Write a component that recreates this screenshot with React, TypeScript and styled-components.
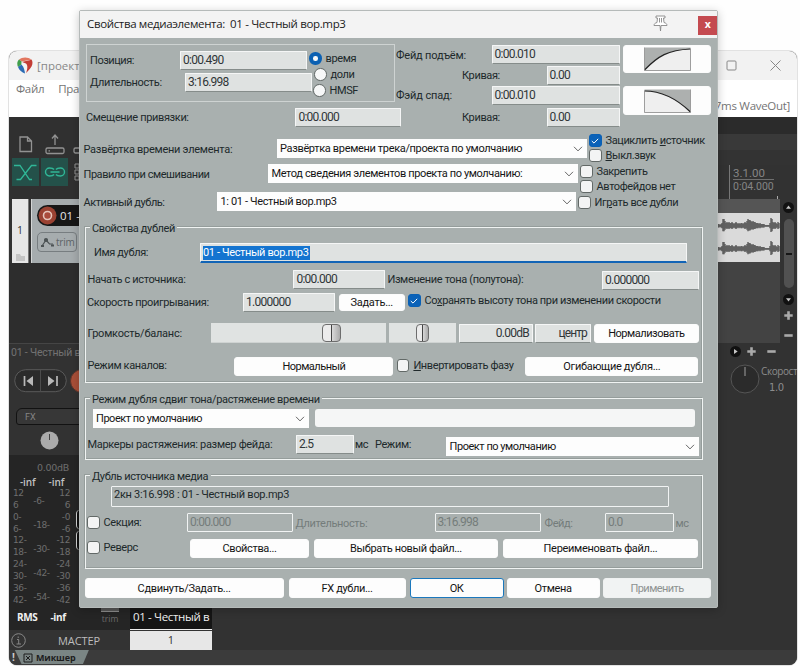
import React from 'react';
import styled, { createGlobalStyle, css } from 'styled-components';

const GlobalStyle = createGlobalStyle`
  * { box-sizing: border-box; }
  body { margin: 0; background: #fefefe; overflow: hidden; }
  svg { flex: none; display: block; }
`;

interface Place { $w?: number; $h?: number; $ml?: number; $mt?: number }

const place = css<Place>`
  flex: none;
  ${p => p.$w !== undefined && `width: ${p.$w}px;`}
  ${p => p.$h !== undefined && `height: ${p.$h}px;`}
  margin-left: ${p => p.$ml ?? 0}px;
  margin-top: ${p => p.$mt ?? 0}px;
`;

const Stage = styled.div`
  position: relative;
  width: 800px;
  height: 670px;
  padding: 51px 3px 5px 9px;
  overflow: hidden;
  font-family: Roboto, "Liberation Sans", sans-serif;
  font-size: 11px;
`;

/* ---------- main window ---------- */

const MainWindow = styled.div`
  display: flex;
  flex-direction: column;
  height: 614px;
  border-radius: 8px;
  overflow: hidden;
  background: #323232;
  box-shadow: 0 0 0 1px #e2e2e2;
  font-family: "Open Sans", sans-serif;
`;

const MainTitle = styled.div`
  display: flex;
  align-items: center;
  height: 29px;
  padding: 0 16px 0 8px;
  background: #f2f2f2;
  color: #888;
  font-size: 11.5px;
`;

const MainTitleText = styled.span`
  flex: 1;
  margin-left: 4px;
`;

const WindowIcons = styled.div`
  display: flex;
  gap: 33px;
`;

const MenuBar = styled.div`
  display: flex;
  justify-content: space-between;
  height: 37px;
  padding: 1px 7px 0 7px;
  background: #fff;
  color: #757575;
  font-size: 11.5px;
  line-height: 16px;
  letter-spacing: -0.3px;
`;

const MenuItems = styled.div`
  display: flex;
  gap: 14px;
`;

const AudioStatus = styled.span`
  margin-top: 17px;
`;

const Workspace = styled.div`
  display: flex;
  justify-content: space-between;
  height: 533px;
`;

const LeftSide = styled.div`
  display: flex;
  flex-direction: column;
  width: 203px;
`;

const RightSide = styled.div`
  display: flex;
  flex-direction: column;
  width: 80px;
`;

const Toolbar = styled.div`
  display: grid;
  grid-template-columns: 27px 27px 27px;
  grid-template-rows: 28px 28px;
  gap: 0 2px;
  height: 82px;
  padding: 13px 0 0 3px;
  background: #303030;
`;

const Tool = styled.div<{ $on?: boolean }>`
  display: flex;
  align-items: center;
  justify-content: center;
  background: ${p => (p.$on ? '#24514a' : 'transparent')};
  color: ${p => (p.$on ? '#30b797' : '#929292')};
`;

const Track = styled.div`
  display: flex;
  height: 64px;
  padding-left: 3px;
`;

const TrackNumber = styled.div`
  display: flex;
  flex-direction: column;
  justify-content: space-between;
  width: 17px;
  padding: 24px 4px 2px;
  background: #e6e6e6;
  border-right: 1px solid #777;
  color: #333;
  font-size: 10.5px;
  line-height: 15px;
  text-align: center;
`;

const TrackPanel = styled.div`
  width: 60px;
  margin-left: 2px;
  padding: 6px 0 0 5px;
  background: #a6acae;
  border-left: 1px solid #d4d6d6;
`;

const TrackName = styled.div`
  display: flex;
  align-items: center;
  gap: 3px;
  height: 21px;
  padding-left: 1px;
  border-radius: 11px 0 0 11px;
  background: #171717;
  color: #e8e8e8;
  font-size: 11.5px;
  white-space: nowrap;
`;

const TrimButton = styled.div`
  display: flex;
  align-items: center;
  gap: 2px;
  width: 40px;
  height: 20px;
  margin-top: 6px;
  padding-left: 3px;
  border: 1px solid #777d80;
  border-radius: 5px 4px 4px 4px;
  color: #5d6366;
  font-size: 10px;
  letter-spacing: -0.2px;
`;

const ArrangeEmpty = styled.div`
  height: 81px;
  background: #2d2d2d;
  border-bottom: 1px solid #454545;
`;

const ItemCaption = styled.div`
  height: 18px;
  padding-left: 2px;
  color: #737373;
  font: 10.5px/17px Roboto, sans-serif;
  letter-spacing: -0.2px;
  white-space: nowrap;
`;

const Transport = styled.div`
  display: flex;
  gap: 3px;
  height: 42px;
  padding: 7px 0 0 5px;
`;

const FxBar = styled.div`
  width: 80px;
  height: 17px;
  margin: 4px 0 0 7px;
  padding-left: 8px;
  border: 1.5px solid #121212;
  border-radius: 6px 0 0 3px;
  background: #373737;
  color: #858585;
  font: 9px/17px Roboto, sans-serif;
`;

const PanKnob = styled.div`
  display: flex;
  justify-content: center;
  width: 80px;
  height: 30px;
  padding-top: 6px;
`;

const Mixer = styled.div`
  display: flex;
  flex: 1;
  background: #252525;
`;

const MasterMeter = styled.div`
  display: flex;
  flex-direction: column;
  width: 62px;
  padding: 7px 0 0 3px;
  color: #6e6e6e;
  font: 9.5px/12px "DejaVu Sans", sans-serif;
`;

const MasterGain = styled.div`
  padding-left: 25px;
  letter-spacing: -0.3px;
`;

const Peaks = styled.div<{ $mt: number; $bold?: boolean }>`
  display: flex;
  gap: 13px;
  height: 12px;
  margin-top: ${p => p.$mt}px;
  padding-left: ${p => (p.$bold ? 5 : 8)}px;
  color: ${p => (p.$bold ? '#f0f0f0' : '#c2c2c2')};
  font-family: "Open Sans", sans-serif;
  font-size: 10px;
  line-height: ${p => (p.$bold ? 12 : 10)}px;
  font-weight: ${p => (p.$bold ? 700 : 600)};
  letter-spacing: ${p => (p.$bold ? -0.35 : -0.1)}px;
`;

const Scales = styled.div`
  display: flex;
  justify-content: space-between;
  width: 58px;
  height: 119px;
  margin-top: -1px;
  padding-left: 1px;
  letter-spacing: -0.4px;
  font-size: 9px;
`;

const ScaleColumn = styled.div<{ $step: number; $align?: string; $mt?: number }>`
  display: flex;
  flex-direction: column;
  margin-top: ${p => p.$mt ?? 0}px;
  line-height: ${p => p.$step}px;
  text-align: ${p => p.$align ?? 'left'};
`;

const FaderEdges = styled.div`
  display: flex;
  flex-direction: column;
  gap: 2px;
  width: 29px;
  padding: 55px 0 0 5px;
`;

const FaderEdge = styled.div`
  height: 19px;
  border-left: 1.5px solid #d5d5d5;
  border-radius: 4px;
  background: #0f0f0f;
`;

const TrimStrip = styled.div`
  display: flex;
  flex-direction: column;
  align-items: center;
  width: 20px;
  padding-top: 151px;
  color: #6b6b6b;
  font-size: 8.5px;
  line-height: 14px;
`;

const TrimSlot = styled.div`
  width: 18px;
  height: 6px;
  border-bottom: 1px solid #8a8a8a;
  background: #555;
`;

const StripName = styled.div`
  align-self: flex-end;
  width: 82px;
  height: 24px;
  margin-left: 10px;
  padding-left: 3px;
  border-bottom: 1px solid #eee;
  background: #151515;
  color: #f2f2f2;
  font-size: 11.5px;
  line-height: 22px;
  letter-spacing: -0.35px;
  white-space: nowrap;
`;

const MasterRow = styled.div`
  display: flex;
  align-items: center;
  height: 20px;
  padding-left: 2px;
  background: #333;
  color: #bdbdbd;
  font-size: 11px;
`;

const MasterName = styled.span`
  width: 86px;
  margin-left: 32px;
  letter-spacing: -0.1px;
`;

const StripNumber = styled.div`
  width: 82px;
  height: 19px;
  margin-left: -14px;
  background: #e7e7e7;
  color: #333;
  line-height: 18px;
  text-align: center;
`;

const DockBar = styled.div`
  display: flex;
  height: 15px;
  padding-left: 3px;
  background: #3b3b3b;
  color: #ccc;
  font: bold 10px/14px "Open Sans", sans-serif;
`;

const DockTab = styled.div`
  display: flex;
  align-items: center;
  gap: 3px;
  width: 74px;
  height: 14px;
  padding: 1px 0 0 8px;
  background: #7a8584;
  clip-path: polygon(0 0, 100% 0, 92% 100%, 9% 100%);
  color: #1d1d1d;
  font-size: 9px;
  letter-spacing: -0.1px;
`;

const RulerTop = styled.div`
  height: 48px;
  background: linear-gradient(#2b2b2b 0 17px, #393939 17px 33px, #333 33px);
`;

const Ruler = styled.div`
  display: flex;
  align-items: flex-start;
  height: 34px;
  padding-left: 12px;
`;

const RulerMark = styled.div`
  width: 48px;
  height: 35px;
  padding-left: 3px;
  border-left: 1px solid #777;
  color: #858585;
  font: 11px/15px Roboto, sans-serif;
`;

const RulerBeat = styled.div`
  width: 41px;
  height: 15px;
  border-bottom: 1px solid #6f6f6f;
  font-size: 11.5px;
  line-height: 17px;
`;

const RulerTime = styled.div`
  line-height: 13px;
  font-size: 10.5px;
`;

const RulerTick = styled.div`
  height: 4px;
  margin-top: 31px;
  border-left: 1px solid #aaa;
`;

const Arrange = styled.div`
  display: flex;
  height: 144px;
`;

const ArrangeLane = styled.div`
  width: 63px;
  padding-top: 14px;
  background: linear-gradient(#555 0 14px, #434343 14px);
`;

const ScrollRail = styled.div`
  display: flex;
  flex-direction: column;
  align-items: center;
  width: 17px;
  padding-top: 3px;
`;

const ScrollThumb = styled.div`
  display: flex;
  align-items: center;
  width: 10px;
  height: 69px;
  margin: 6px 0;
  border-radius: 5px;
  background: #515151;
`;

const ThumbGrip = styled.div`
  width: 6px;
  height: 2px;
  margin: 0 2px;
  background: #161616;
`;

const ZoomRow = styled.div`
  display: flex;
  align-items: center;
  height: 17px;
  padding-left: 13px;
`;

const ZoomButtons = styled.div`
  display: flex;
  gap: 11px;
  margin-left: 6px;
`;

const RateArea = styled.div`
  display: flex;
  gap: 1px;
  padding: 3px 0 0 13px;
  color: #8c8c8c;
  font-size: 10px;
  line-height: 17px;
  letter-spacing: -0.4px;
  white-space: nowrap;
`;

const RateValue = styled.div`
  padding-left: 8px;
  font: 10px/15px "DejaVu Sans", sans-serif;
`;

/* ---------- dialog ---------- */

const Dialog = styled.div`
  position: absolute;
  left: 79px;
  top: 10px;
  width: 639px;
  height: 598px;
  display: flex;
  flex-direction: column;
  border: 1px solid #b5bab9;
  border-radius: 2px;
  background: #a9b0af;
  box-shadow: 0 2px 10px rgba(0, 0, 0, 0.22);
  color: #20292b;
  letter-spacing: -0.36px;
`;

const DialogTitle = styled.div`
  display: flex;
  height: 27px;
  padding-left: 7px;
  background: #f3f3f3;
  color: #1b1b1b;
  font: 11.5px/26px "Open Sans", sans-serif;
  letter-spacing: -0.35px;
  white-space: pre;
`;

const DialogTitleText = styled.span`
  width: 566px;
`;

const CloseButton = styled.div`
  width: 19px;
  height: 19px;
  margin: 5px 0 0 30px;
  background: #c44a50;
  color: #fff;
  font: bold 10.5px/17px "Open Sans", sans-serif;
  text-align: center;
`;

const Row = styled.div<{ $h?: number; $mt?: number; $ml?: number }>`
  display: flex;
  align-items: flex-start;
  height: ${p => p.$h ?? 19}px;
  margin-top: ${p => p.$mt ?? 0}px;
  margin-left: ${p => p.$ml ?? 0}px;
`;

const Column = styled.div<Place>`
  display: flex;
  flex-direction: column;
  align-items: flex-start;
  ${place}
`;

const Label = styled.div<Place & { $dim?: boolean; $ls?: number }>`
  ${place}
  color: ${p => (p.$dim ? '#747c7b' : 'inherit')};
  line-height: 14px;
  letter-spacing: ${p => p.$ls ?? -0.36}px;
  white-space: nowrap;
`;

const Field = styled.div<Place & { $align?: string; $locked?: boolean; $ls?: number }>`
  ${place}
  height: ${p => p.$h ?? 19}px;
  padding: 0 3px 0 2px;
  border: ${p => (p.$locked ? '1.5px solid #f1f3f3' : '1px solid #f5f6f6')};
  border-bottom-color: ${p => (p.$locked ? '#f1f3f3' : '#858c8a')};
  border-radius: 1px;
  background: ${p => (p.$locked ? '#a9b0af' : '#dfe2e1')};
  color: ${p => (p.$locked ? '#757d7b' : '#303638')};
  font-size: 12px;
  line-height: 17px;
  letter-spacing: ${p => p.$ls ?? -0.75}px;
  text-align: ${p => p.$align ?? 'left'};
  white-space: nowrap;
`;

const NameField = styled(Field)`
  border-bottom: 2px solid #1264b6;
  padding: 2px 0 0 2px;
`;

const SourceField = styled(Field)`
  color: #20292b;
  font-size: 11px;
  line-height: 16px;
  letter-spacing: -0.28px;
`;

const Selected = styled.div`
  width: 107px;
  height: 14px;
  background: #1474d0;
  color: #fff;
  font-size: 11px;
  line-height: 14px;
  letter-spacing: -0.37px;
`;

const Select = styled.div<Place & { $ls?: number }>`
  ${place}
  display: flex;
  align-items: center;
  justify-content: space-between;
  height: 19px;
  padding: 0 4px 0 3.5px;
  background: #fdfdfd;
  color: #151515;
  letter-spacing: ${p => p.$ls ?? -0.36}px;
  white-space: nowrap;
`;

const Button = styled.div<Place & { $tone?: 'primary' | 'disabled'; $ls?: number }>`
  ${place}
  display: flex;
  align-items: center;
  justify-content: center;
  height: ${p => p.$h ?? 19}px;
  border: 1px solid ${p => (p.$tone === 'primary' ? '#1b78bd' : p.$tone === 'disabled' ? '#eff1f1' : '#fbfbfb')};
  border-radius: 3px;
  background: ${p => (p.$tone === 'disabled' ? '#f1f3f3' : '#fdfdfd')};
  color: ${p => (p.$tone === 'disabled' ? '#8d9291' : '#151515')};
  letter-spacing: ${p => p.$ls ?? -0.36}px;
  white-space: nowrap;
`;

const CheckLine = styled.div<Place>`
  display: flex;
  align-items: center;
  gap: 4px;
  ${place}
  height: ${p => p.$h ?? 13}px;
  line-height: 13px;
  white-space: nowrap;
  letter-spacing: -0.38px;
`;

const Box = styled.span<{ $on?: boolean }>`
  display: flex;
  align-items: center;
  justify-content: center;
  flex: none;
  width: 12.5px;
  height: 12.5px;
  border: 1px solid ${p => (p.$on ? '#0a60b4' : '#626967')};
  border-radius: 3px;
  background: ${p => (p.$on ? '#0b62b8' : '#f3f4f4')};
`;

const Dot = styled.span<{ $on?: boolean }>`
  flex: none;
  width: 12.5px;
  height: 12.5px;
  border: ${p => (p.$on ? '4px solid #0b60b2' : '1px solid #626967')};
  border-radius: 50%;
  background: #f7f8f8;
`;

const PositionGroup = styled.div`
  display: flex;
  width: 309px;
  height: 58px;
  border: 1px solid #ced3d2;
`;

const Group = styled.div<{ $h: number; $mt: number }>`
  display: flex;
  flex-direction: column;
  width: 618px;
  height: ${p => p.$h}px;
  margin: ${p => p.$mt}px 0 0 5px;
  border: 1px solid #f0f3f2;
  box-shadow: -1px -1px 0 #959d9b, inset -1px -1px 0 #959d9b;
`;

const Legend = styled.div<{ $w: number; $ls?: number }>`
  width: ${p => p.$w}px;
  height: 14px;
  margin: -7px 0 0 4px;
  padding-left: 2px;
  background: #a9b0af;
  line-height: 15px;
  letter-spacing: ${p => p.$ls ?? -0.37}px;
  white-space: nowrap;
  flex: none;
`;

const SliderTrack = styled.div<Place>`
  ${place}
  display: flex;
  align-items: center;
  height: 20px;
  background: #e0e3e2;
  border-bottom: 1px solid #cfd3d2;
`;

const SliderThumb = styled.div<{ $ml: number; $w: number }>`
  display: flex;
  width: ${p => p.$w}px;
  height: 18px;
  margin-left: ${p => p.$ml}px;
  border: 1px solid #6d6d6d;
  border-radius: 4px;
  background: linear-gradient(90deg, #ececec 0 46%, #444 46% 53%, #d9d9d9 53%, #aaa);
`;

const StatusBar = styled.div<Place>`
  ${place}
  border-radius: 3px;
  background: #f5f6f6;
`;

const Chevron = () => (
  <svg width="10" height="6" viewBox="0 0 10 6" fill="none" stroke="#666" strokeWidth="1">
    <path d="M1 0.8 5 4.9 9 0.8" />
  </svg>
);

const Check = ({ on }: { on?: boolean }) => (
  <Box $on={on}>
    {on && (
      <svg width="8" height="6" viewBox="0 0 8 6" fill="none" stroke="#fff" strokeWidth="1">
        <path d="M0.8 3 3 5.1 7.2 0.8" />
      </svg>
    )}
  </Box>
);

const FadeCurve = ({ out }: { out?: boolean }) => (
  <svg width="47" height="24" viewBox="0 0 47 24">
    <rect x="0.5" y="0.5" width="46" height="23" fill="#adb0af" />
    <path d={out ? 'M0.5 2 C18 2 34 11 46.5 23.5 H0.5Z' : 'M0.5 23 C14 9 24 3 46.5 2 V23.5 H0.5Z'} fill="#efefef" />
    <path d={out ? 'M0.5 2 C18 2 34 11 46.5 23' : 'M0.5 23 C14 9 24 3 46.5 2'} fill="none" stroke="#222" strokeWidth="1.2" />
    <path d={out ? 'M0.5 2 V23.5 H46.5 V0.5' : 'M0.5 0.5 V23.5 H46.5 V2'} fill="none" stroke="#8d8d8d" strokeWidth="0.8" />
  </svg>
);

const Logo = () => (
  <svg width="16" height="17" viewBox="0 0 16 17">
    <path d="M2 2.500C5-.2 11-.4 14.500 2.500 12 3.500 8 3.500 4.500 4.500Z" fill="#e2765f" />
    <path d="M14.500 2.500C16.500 5.500 15.500 10 11 14L9 16C10.500 12 11 8.500 9 6.500L5 5C9 3.500 12 4 14.500 2.500Z" fill="#c33c35" />
    <path d="M2 2.500C-.2 4.500 0 8 1 10L4.500 7.500V4.500Z" fill="#3f9e4a" />
    <path d="M1 10C2 13 5 15.500 8 16.500 7.500 13 7 10 4.500 7.500Z" fill="#2c6cb4" />
    <path d="M4.800 5.500C8 6 10 7.500 8.500 14.500 8 11 7.500 9 4.800 7.500Z" fill="#f4f4f4" />
  </svg>
);

const RoundArrow = ({ dir }: { dir: 'up' | 'down' | 'right' }) => (
  <svg width="11" height="11" viewBox="0 0 11 11">
    <circle cx="5.500" cy="5.500" r="5.500" fill="#111" />
    <path d={dir === 'up' ? 'M3 6.800H8L5.500 3.500Z' : dir === 'down' ? 'M3 4.300H8L5.500 7.600Z' : 'M4 3V8L7.700 5.500Z'} fill="#c6c6c6" />
  </svg>
);

const Plus = () => (
  <svg width="9" height="11" viewBox="0 0 9 11" stroke="#a9a9a9" strokeWidth="2.600">
    <path d="M0.300 5.500H8.700M4.500 1.300V9.700" />
  </svg>
);

const Minus = () => (
  <svg width="9" height="11" viewBox="0 0 9 11" stroke="#a9a9a9" strokeWidth="2.600">
    <path d="M0.300 5.500H8.700" />
  </svg>
);

const waveTop = [2, 2, 1, 2, 3, 7, 7, 5, 3, 4, 3, 4, 3, 3, 4, 3, 2, 3, 4, 3, 2, 3, 2, 3, 3, 2, 3, 4, 3, 5, 7, 6, 6, 5, 4, 5, 4, 4, 3, 3, 3, 2, 3, 2, 2, 2, 2, 1, 1, 1, 1, 1, 3, 8, 7, 4, 3, 4, 3, 2, 4, 3];

const Waveform = () => (
  <svg width="63" height="49" viewBox="0 0 63 49">
    <rect width="63" height="49" fill="#dadada" />
    {waveTop.map((a, i) => (
      <path key={i} d={`M${i + 1} ${13 - a}V${13 + a * 0.75}M${i + 1} ${36 - a}V${36 + a * 0.75}`} stroke="#505050" strokeWidth="1.300" />
    ))}
  </svg>
);

const MainView = () => (
  <MainWindow>
    <MainTitle>
      <Logo />
      <MainTitleText>[проект</MainTitleText>
      <WindowIcons>
        <svg width="11" height="11" viewBox="0 0 11 11" fill="none" stroke="#888"><rect x="1" y="1" width="9" height="9" rx="1" /></svg>
        <svg width="11" height="11" viewBox="0 0 11 11" fill="none" stroke="#888"><path d="M0.500.500 10.500 10.500M10.500.500.500 10.500" /></svg>
      </WindowIcons>
    </MainTitle>
    <MenuBar>
      <MenuItems><span>Файл</span><span>Правка</span></MenuItems>
      <AudioStatus>7ms WaveOut]</AudioStatus>
    </MenuBar>
    <Workspace>
      <LeftSide>
        <Toolbar>
          <Tool>
            <svg width="14" height="17" viewBox="0 0 14 17" fill="none" stroke="currentColor" strokeWidth="1.300"><path d="M1 1H8.500L12.500 5V15.500H1ZM8.500 1V5H12.500" /></svg>
          </Tool>
          <Tool>
            <svg width="20" height="22" viewBox="0 0 20 22" fill="none" stroke="currentColor" strokeWidth="1.300"><rect x="1" y="15" width="18" height="5.500" rx="1.500" /><path d="M10 12V3M7 5.500 10 2 13 5.500M3.500 17.800H5" /></svg>
          </Tool>
          <Tool>
            <svg width="22" height="22" viewBox="0 0 22 22" fill="none" stroke="currentColor" strokeWidth="1.300"><rect x="1" y="15" width="19" height="5" rx="1.500" /></svg>
          </Tool>
          <Tool $on>
            <svg width="23" height="17" viewBox="0 0 23 17" fill="none" stroke="currentColor" strokeWidth="1.300"><path d="M0 1.500H6L15.500 15.500H18M22.500 1.500H17.500L6.500 15.500H2.500" /></svg>
          </Tool>
          <Tool $on>
            <svg width="22" height="12" viewBox="0 0 22 12" fill="none" stroke="currentColor" strokeWidth="1.400"><path d="M10 8.500C9 10 8 10 5.500 10a4 4 0 0 1 0-8C8 2 9 2 10 3.500M12 3.500C13 2 14 2 16.500 2a4 4 0 0 1 0 8C14 10 13 10 12 8.500M6.500 6H15.500" /></svg>
          </Tool>
          <Tool>
            <svg width="20" height="18" viewBox="0 0 20 18" fill="none" stroke="currentColor"><path d="M1 1H5V5H1ZM1 7H5V11H1ZM1 13H5V17H1Z" /></svg>
          </Tool>
        </Toolbar>
        <Track>
          <TrackNumber>
            1
            <svg width="9" height="7" viewBox="0 0 9 7"><path d="M0 0H4L5 2H9V7H0Z" fill="#c4c4c4" /></svg>
          </TrackNumber>
          <TrackPanel>
            <TrackName>
              <svg width="19" height="19" viewBox="0 0 19 19"><circle cx="9.500" cy="9.500" r="9" fill="#9a4232" /><circle cx="9.500" cy="9.500" r="4" fill="#a94b3b" stroke="#e4c5bb" strokeWidth="1.600" /></svg>
              01 -
            </TrackName>
            <TrimButton>
              <svg width="13" height="10" viewBox="0 0 13 10" fill="none" stroke="#4d5355" strokeWidth="1.200"><path d="M1 9 5 3 8.500 7 12 7" /><circle cx="5" cy="3" r="1.500" fill="#4d5355" /><path d="M0 9H3M10 8.500H13" strokeWidth="2" /></svg>
              trim
            </TrimButton>
          </TrackPanel>
        </Track>
        <ArrangeEmpty />
        <ItemCaption>01 - Честный вор</ItemCaption>
        <Transport>
          <svg width="53" height="24" viewBox="0 0 53 24" fill="none">
            <rect x="0.700" y="0.700" width="51.600" height="22" rx="11" fill="#2b2b2b" stroke="#5a5a5a" />
            <path d="M26.500 1V22.500" stroke="#4c4c4c" />
            <path d="M10.500 7V17M43 7V17" stroke="#b9b9b9" strokeWidth="1.700" />
            <path d="M19 7V17L12.500 12ZM34 7V17L40.500 12Z" fill="#b9b9b9" />
          </svg>
          <svg width="24" height="24" viewBox="0 0 24 24"><circle cx="12" cy="12" r="11.500" fill="#a94f38" stroke="#59352c" /></svg>
        </Transport>
        <FxBar>FX</FxBar>
        <PanKnob>
          <svg width="19" height="19" viewBox="0 0 19 19"><circle cx="9.500" cy="9.500" r="9" fill="#ababab" /><path d="M9.500 3V9" stroke="#444" /></svg>
        </PanKnob>
        <Mixer>
          <MasterMeter>
            <MasterGain>0.00dB</MasterGain>
            <Peaks $mt={3}><span>-inf</span><span>-inf</span></Peaks>
            <Scales>
              <ScaleColumn $step={11.85}>
                {['12', '6', '0-', '6-', '12-', '18-', '24-', '30-', '36-', '42-'].map(v => <span key={v}>{v}</span>)}
              </ScaleColumn>
              <ScaleColumn $step={24} $mt={1}>
                {['-6-', '-18-', '-30-', '-42-', '-54-'].map(v => <span key={v}>{v}</span>)}
              </ScaleColumn>
              <ScaleColumn $step={11.85} $align="right">
                {['12', '6', '-0', '-6', '-12', '-18', '-24', '-30', '-36', '-42'].map(v => <span key={v}>{v}</span>)}
              </ScaleColumn>
            </Scales>
            <Peaks $mt={4} $bold><span>RMS</span><span>-inf</span></Peaks>
          </MasterMeter>
          <FaderEdges><FaderEdge /><FaderEdge /></FaderEdges>
          <TrimStrip><TrimSlot />trim</TrimStrip>
          <StripName>01 - Честный в</StripName>
        </Mixer>
        <MasterRow>
          <svg width="15" height="15" viewBox="0 0 15 15" fill="none" stroke="#888"><circle cx="7.500" cy="7.500" r="6.800" /><path d="M6 6.500H7.700V11M5.500 11H10M7.200 3.500V5" /></svg>
          <MasterName>МАСТЕР</MasterName>
          <StripNumber>1</StripNumber>
        </MasterRow>
      </LeftSide>
      <RightSide>
        <RulerTop />
        <Ruler>
          <RulerMark>
            <RulerBeat>3.1.00</RulerBeat>
            <RulerTime>0:04.000</RulerTime>
          </RulerMark>
          <RulerTick />
        </Ruler>
        <Arrange>
          <ArrangeLane><Waveform /></ArrangeLane>
          <ScrollRail>
            <RoundArrow dir="up" />
            <ScrollThumb><ThumbGrip /></ScrollThumb>
            <RoundArrow dir="down" />
            <Column $h={16} $mt={5}><Plus /></Column>
            <Column $mt={4}><Minus /></Column>
          </ScrollRail>
        </Arrange>
        <ZoomRow><RoundArrow dir="right" /><ZoomButtons><Plus /><Minus /></ZoomButtons></ZoomRow>
        <RateArea>
          <svg width="30" height="31" viewBox="0 0 30 31"><circle cx="15" cy="16" r="14" fill="#2b2b2b" stroke="#555" /><path d="M15 4V13" stroke="#a0a0a0" /></svg>
          <div>Скорост<RateValue>1.0</RateValue></div>
        </RateArea>
      </RightSide>
    </Workspace>
    <DockBar>
      !
      <DockTab>
        <svg width="10" height="10" viewBox="0 0 10 10" fill="none" stroke="#1d1d1d"><path d="M1 1H9V9H1ZM3 3 7 7M7 3 3 7" /></svg>
        Микшер
      </DockTab>
    </DockBar>
  </MainWindow>
);

const TopSection = () => (
  <Row $h={88} $mt={6} $ml={6}>
    <Column $w={310}>
      <PositionGroup>
        <Column $w={222}>
          <Row $mt={6}>
            <Label $w={90} $ml={3} $mt={3} $ls={-0.45}>Позиция:</Label>
            <Field $w={127}>0:00.490</Field>
          </Row>
          <Row $mt={3}>
            <Label $w={95} $ml={3} $mt={3}>Длительность:</Label>
            <Field $w={127}>3:16.998</Field>
          </Row>
        </Column>
        <Column>
          <CheckLine $mt={7}><Dot $on />время</CheckLine>
          <CheckLine $mt={3} $ml={5}><Dot />доли</CheckLine>
          <CheckLine $mt={3} $ml={4}><Dot />HMSF</CheckLine>
        </Column>
      </PositionGroup>
      <Row $mt={6}>
        <Label $w={209.4} $mt={3}>Смещение привязки:</Label>
        <Field $w={106}>0:00.000</Field>
      </Row>
    </Column>
    <Column $w={227}>
      <Row $mt={1}>
        <Label $w={95.5} $mt={4} $ls={-0.19}>Фейд подъём:</Label>
        <Field $w={128}>0:00.010</Field>
      </Row>
      <Row $mt={2} $ml={66}>
        <Label $w={84.5} $mt={3}>Кривая:</Label>
        <Field $w={73}>0.00</Field>
      </Row>
      <Row $mt={1}>
        <Label $w={95.5} $mt={3} $ls={-0.15}>Фэйд спад:</Label>
        <Field $w={128}>0:00.010</Field>
      </Row>
      <Row $mt={3} $ml={66}>
        <Label $w={84.5} $mt={3}>Кривая:</Label>
        <Field $w={73}>0.00</Field>
      </Row>
    </Column>
    <Column>
      <Button $w={88} $h={28} $mt={1}><FadeCurve /></Button>
      <Button $w={88} $h={29} $mt={13}><FadeCurve out /></Button>
    </Column>
  </Row>
);

const RoutingSection = () => (
  <Row $h={80} $mt={2} $ml={3.5}>
    <Column>
      <Row $mt={5}>
        <Label $w={193} $mt={4} $ls={-0.27}>Развёртка времени элемента:</Label>
        <Select $w={310} $ls={-0.34}>Развёртка времени трека/проекта по умолчанию<Chevron /></Select>
      </Row>
      <Row $mt={6}>
        <Label $w={184.5} $mt={4} $ls={-0.45}>Правило при смешивании</Label>
        <Select $w={310} $ls={-0.38}>Метод сведения элементов проекта по умолчанию:<Chevron /></Select>
      </Row>
      <Row $mt={9}>
        <Label $w={133.500} $mt={4} $ls={-0.46}>Активный дубль:</Label>
        <Select $w={359} $ls={-0.36}>1: 01 - Честный вор.mp3<Chevron /></Select>
      </Row>
    </Column>
    <Column $ml={-6.500}>
      <CheckLine $ml={9}><Check on /><span>Зациклить <u>и</u>сточник</span></CheckLine>
      <CheckLine $ml={9} $mt={2}><Check /><span><u>В</u>ыкл.звук</span></CheckLine>
      <CheckLine $mt={3}><Check />Закрепить</CheckLine>
      <CheckLine $mt={2}><Check />Автофейдов нет</CheckLine>
      <CheckLine $ml={-2} $mt={3}><Check /><span>Иг<u>р</u>ать все дубли</span></CheckLine>
    </Column>
  </Row>
);

const TakeSection = () => (
  <Group $h={156} $mt={13}>
    <Legend $w={87}>Свойства дублей</Legend>
    <Row $mt={8} $ml={8}>
      <Label $w={106} $mt={3}>Имя дубля:</Label>
      <NameField $w={487} $h={20}><Selected>01 - Честный вор.mp3</Selected></NameField>
    </Row>
    <Row $mt={8} $ml={1.4}>
      <Label $w={206} $mt={3}>Начать с источника:</Label>
      <Field $w={92}>0:00.000</Field>
      <Label $w={214.600} $ml={2} $mt={3}>Изменение тона (полутона):</Label>
      <Field $w={97} $mt={1}>0.000000</Field>
    </Row>
    <Row $mt={4} $ml={1}>
      <Label $w={156} $mt={3}>Скорость проигрывания:</Label>
      <Field $w={92}>1.000000</Field>
      <Button $w={66.500} $h={17} $ml={3.500} $mt={1} $ls={-0.28}>Задать...</Button>
      <CheckLine $ml={3} $mt={1}><Check on /><span>Со<u>х</u>ранять высоту тона при изменении скорости</span></CheckLine>
    </Row>
    <Row $mt={11} $ml={1.4} $h={20}>
      <Label $w={123.500} $mt={4} $ls={-0.23}>Громкость/баланс:</Label>
      <SliderTrack $w={175}><SliderThumb $ml={111} $w={19} /></SliderTrack>
      <SliderTrack $w={67} $ml={3}><SliderThumb $ml={27.5} $w={13} /></SliderTrack>
      <Field $w={74} $ml={3} $mt={1} $align="right">0.00dB</Field>
      <Field $w={56} $ml={2} $mt={1} $align="right" $ls={-0.9}>центр</Field>
      <Button $w={105} $ml={3} $mt={1} $ls={-0.46}>Нормализовать</Button>
    </Row>
    <Row $mt={14} $ml={1.4}>
      <Label $w={147} $mt={2}>Режим каналов:</Label>
      <Button $w={159} $ls={-0.5}>Нормальный</Button>
      <CheckLine $ml={3.500} $mt={2} $w={124}><Check /><span><u>И</u>нвертировать фазу</span></CheckLine>
      <Button $w={173} $ml={4.500} $ls={-0.31}>Огибающие дубля...</Button>
    </Row>
  </Group>
);

const StretchSection = () => (
  <Group $h={62} $mt={15}>
    <Legend $w={232} $ls={-0.34}>Режим дубля сдвиг тона/растяжение времени</Legend>
    <Row $mt={3} $ml={6.500}>
      <Select $w={216} $ls={-0.47}>Проект по умолчанию<Chevron /></Select>
      <StatusBar $w={380} $h={18} $ml={6} />
    </Row>
    <Row $mt={7} $ml={1.4}>
      <Label $w={208.500} $mt={3} $ls={-0.29}>Маркеры растяжения: размер фейда:</Label>
      <Field $w={58}>2.5</Field>
      <Label $w={20} $ml={1} $mt={3}>мс</Label>
      <Label $w={71.200} $mt={3}>Режим:</Label>
      <Select $w={253} $mt={2} $ls={-0.47}>Проект по умолчанию<Chevron /></Select>
    </Row>
  </Group>
);

const SourceSection = () => (
  <Group $h={94} $mt={15}>
    <Legend $w={121} $ls={-0.4}>Дубль источника медиа</Legend>
    <Row $mt={3} $ml={25} $h={21}>
      <SourceField $w={558} $h={21} $locked>2кн 3:16.998 : 01 - Честный вор.mp3</SourceField>
    </Row>
    <Row $mt={6} $ml={1}>
      <CheckLine $mt={3} $w={100}><Check />Секция:</CheckLine>
      <Field $w={106} $locked>0:00.000</Field>
      <Label $w={139} $ml={2.500} $mt={4} $dim>Длительность:</Label>
      <Field $w={106} $locked>3:16.998</Field>
      <Label $w={60.500} $ml={4} $mt={4} $dim>Фейд:</Label>
      <Field $w={69} $locked>0.0</Field>
      <Label $ml={1.500} $mt={4} $dim>мс</Label>
    </Row>
    <Row $mt={7} $ml={1}>
      <CheckLine $mt={2} $w={103}><Check />Реверс</CheckLine>
      <Button $w={119}>Свойства...</Button>
      <Button $w={184} $ml={5}>Выбрать новый файл...</Button>
      <Button $w={195} $ml={5} $ls={-0.3}>Переименовать файл...</Button>
    </Row>
  </Group>
);

export default function App() {
  return (
    <>
      <GlobalStyle />
      <Stage>
        <MainView />
        <Dialog>
          <DialogTitle>
            <DialogTitleText>Свойства медиаэлемента:  01 - Честный вор.mp3</DialogTitleText>
            <Column $mt={4}>
              <svg width="15" height="17" viewBox="0 0 15 17" fill="#fff" stroke="#888" strokeWidth="0.900"><path d="M3 1H12V3H10.500L11 7.500C13 8 14 9 14 10.500H8L7.500 16 7 10.500H1C1 9 2 8 4 7.500L4.500 3H3ZM6.500 3V7.500M8.500 3V7.500" /></svg>
            </Column>
            <CloseButton>x</CloseButton>
          </DialogTitle>
          <TopSection />
          <RoutingSection />
          <TakeSection />
          <StretchSection />
          <SourceSection />
          <Row $mt={9} $ml={4.6}>
            <Button $w={199} $h={20} $ls={-0.32}>Сдвинуть/Задать...</Button>
            <Button $w={117} $h={20} $ml={5}>FX дубли...</Button>
            <Button $w={94} $h={20} $ml={4} $tone="primary">ОК</Button>
            <Button $w={93} $h={20} $ml={3}>Отмена</Button>
            <Button $w={108} $h={20} $ml={3.500} $tone="disabled" $ls={-0.55}>Применить</Button>
          </Row>
        </Dialog>
      </Stage>
    </>
  );
}
